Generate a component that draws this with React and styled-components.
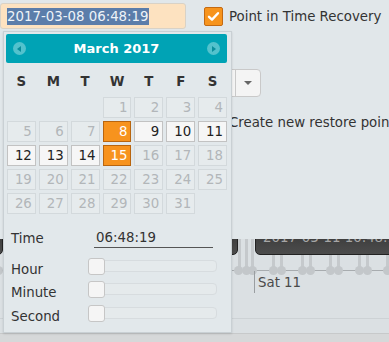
import React from 'react';
import styled, { createGlobalStyle } from 'styled-components';

const Global = createGlobalStyle`
  html, body { margin: 0; padding: 0; background: #e1e7ea; }
  body { font-family: "DejaVu Sans", Verdana, sans-serif; font-size: 13.333px; color: #333; }
  * { box-sizing: border-box; }
`;

const Page = styled.div`
  position: relative;
  width: 389px;
  height: 342px;
  overflow: hidden;
  display: flex;
  flex-direction: column;
`;

const TopBar = styled.div`
  display: flex;
  align-items: center;
  margin-top: 3px;
  height: 26px;
`;

const DateInput = styled.div`
  width: 186px;
  height: 26px;
  background: #fde2c0;
  border: 1px solid #d9d2c6;
  border-radius: 3px;
  display: flex;
  align-items: center;
  padding-left: 6px;
`;

const Selected = styled.span`
  background: #5b7daa;
  color: #eef3f8;
  line-height: 17px;
  white-space: nowrap;
`;

const CheckBox = styled.span`
  width: 19px;
  height: 19px;
  margin-left: 18px;
  background: #f7941d;
  border: 1px solid #c46a12;
  border-radius: 2px;
  display: flex;
  align-items: center;
  justify-content: center;
`;

const CheckLabel = styled.span`
  margin-left: 6px;
  color: #333;
  white-space: nowrap;
`;

const SelectRow = styled.div`
  margin-top: 40px;
  height: 28px;
  display: flex;
  padding-left: 100px;
`;

const SelectBox = styled.div`
  width: 161px;
  height: 28px;
  background: #f4f4f4;
  border: 1px solid #c9c9c9;
  border-radius: 4px;
  display: flex;
  justify-content: flex-end;
`;

const SelectButton = styled.div`
  width: 25px;
  border-left: 1px solid #c9c9c9;
  display: flex;
  align-items: center;
  justify-content: center;
`;

const Caret = styled.span`
  width: 0;
  height: 0;
  border-left: 4px solid transparent;
  border-right: 4px solid transparent;
  border-top: 4px solid #666;
`;

const OptionRow = styled.div`
  margin-top: 16px;
  height: 20px;
  line-height: 20px;
  padding-left: 229px;
  white-space: nowrap;
  color: #333;
`;

const Timeline = styled.div`
  position: relative;
  margin-top: 106px;
  flex: 1;
  overflow: hidden;
  background: #dbe0e3;
`;

const Tooltip = styled.div`
  position: absolute;
  top: -22px;
  height: 38px;
  left: ${p => p.$left}px;
  width: ${p => p.$width}px;
  background: linear-gradient(#2f2f2f, #4c4c4c);
  border: 1px solid #222;
  border-radius: 5px;
  padding: 12px 0 0 7px;
  color: #a6a6a6;
  white-space: nowrap;
  line-height: 16px;
`;

const Stem = styled.div`
  position: absolute;
  left: ${p => p.$x - 1}px;
  top: ${p => p.$top}px;
  height: ${p => 31 - p.$top}px;
  width: 3px;
  background: #c5c9cc;
`;

const Axis = styled.div`
  position: absolute;
  left: 0;
  right: 0;
  top: 31px;
  height: 1px;
  background: #a8acaf;
`;

const Dot = styled.div`
  position: absolute;
  left: ${p => p.$x - 4.5}px;
  top: 27px;
  width: 9px;
  height: 9px;
  border-radius: 50%;
  background: #c3c7ca;
`;

const DayMarker = styled.div`
  position: absolute;
  left: 254px;
  top: 32px;
  height: 22px;
  border-left: 1px solid #9a9ea1;
  padding: 4px 0 0 3px;
  color: #4a4a4a;
  white-space: nowrap;
  line-height: 16px;
`;

const Divider = styled.div`
  position: absolute;
  left: 0;
  right: 0;
  top: 79px;
  height: 1px;
  background: #cdd2d5;
`;

const Footer = styled.div`
  height: 9px;
  background: #d6d8d9;
  border-top: 1px solid #c7c9ca;
`;

/* ---------- Date picker popup ---------- */

const Popup = styled.div`
  position: absolute;
  left: 3px;
  top: 31px;
  width: 229px;
  height: 302px;
  background: #e2e8eb;
  border: 1px solid #c9d0d4;
  box-shadow: 0 1px 2px rgba(0, 0, 0, 0.12);
  padding: 2px 4px 0 2px;
  z-index: 2;
`;

const Header = styled.div`
  height: 29px;
  background: #00a3b5;
  border-radius: 2px;
  display: flex;
  align-items: center;
  justify-content: space-between;
  padding: 0 7px 0 7px;
`;

const NavButton = styled.span`
  width: 13px;
  height: 13px;
  border-radius: 50%;
  background: #53c2cd;
  display: flex;
  align-items: center;
  justify-content: center;
`;

const NavArrow = styled.span`
  width: 0;
  height: 0;
  border-top: 3.5px solid transparent;
  border-bottom: 3.5px solid transparent;
  ${p => (p.$dir === 'left'
    ? 'border-right: 4px solid #0a8e9c; margin-left: -1px;'
    : 'border-left: 4px solid #0a8e9c; margin-left: 1px;')}
`;

const Title = styled.span`
  color: #ffffff;
  font-weight: bold;
  font-size: 13px;
`;

const DayNames = styled.div`
  display: grid;
  grid-template-columns: repeat(7, 1fr);
  column-gap: 3px;
  margin: 8px 0 0 1px;
  width: 220px;
  height: 20px;
  align-items: center;
`;

const DayName = styled.span`
  text-align: center;
  font-weight: bold;
  color: #333;
`;

const Grid = styled.div`
  display: grid;
  grid-template-columns: repeat(7, 1fr);
  grid-auto-rows: 21px;
  gap: 3px;
  margin: 6px 0 0 1px;
  width: 220px;
`;

const cellStyles = {
  disabled: 'background: #e6ebed; border-color: #d3d9dc; color: #b2b6b9;',
  enabled: 'background: #f6f6f6; border-color: #c2c2c2; color: #222;',
  selected: 'background: #f7931e; border-color: #b8650f; color: #fff;',
  empty: 'background: transparent; border-color: transparent;',
};

const Cell = styled.span`
  border: 1px solid;
  text-align: right;
  padding-right: 3px;
  line-height: 19px;
  ${p => cellStyles[p.$kind]}
`;

const TimeRow = styled.div`
  display: flex;
  align-items: center;
  margin-top: 14px;
  height: 20px;
  padding-left: 5px;
`;

const RowLabel = styled.span`
  width: ${p => p.$w}px;
  flex: none;
  padding-top: ${p => p.$drop || 0}px;
`;

const TimeValue = styled.span`
  width: 119px;
  height: 20px;
  line-height: 20px;
  padding-left: 2px;
  border-bottom: 1px solid #555;
`;

const SliderRow = styled.div`
  display: flex;
  align-items: center;
  height: 23px;
  padding-left: 5px;
  margin-top: ${p => p.$mt || 0}px;
`;

const Track = styled.div`
  position: relative;
  width: 129px;
  height: 12px;
  background: #e5eaec;
  border: 1px solid #d7dcdf;
  border-radius: 4px;
`;

const Handle = styled.span`
  position: absolute;
  left: -1px;
  top: -3px;
  width: 17px;
  height: 17px;
  background: #f5f5f5;
  border: 1px solid #c6c6c6;
  border-radius: 3px;
`;

const days = [];
for (let i = 0; i < 3; i++) days.push({ n: '', k: 'empty' });
for (let d = 1; d <= 31; d++) {
  let k = 'disabled';
  if (d === 8 || d === 15) k = 'selected';
  else if (d >= 9 && d <= 14) k = 'enabled';
  days.push({ n: String(d), k });
}

const dots = [238, 246, 252, 273, 281, 302, 310, 330, 338, 359, 367, 387, -2];
const stems = [
  { x: 239, top: 0 }, { x: 246, top: 0 }, { x: 252, top: 0 },
  { x: 273, top: 16 }, { x: 281, top: 16 }, { x: 302, top: 16 }, { x: 310, top: 16 },
  { x: 330, top: 16 }, { x: 338, top: 16 }, { x: 359, top: 16 }, { x: 367, top: 16 },
  { x: 387, top: 16 },
];

export default function App() {
  return (
    <>
      <Global />
      <Page>
        <TopBar>
          <DateInput>
            <Selected>2017-03-08 06:48:19</Selected>
          </DateInput>
          <CheckBox>
            <svg width="13" height="11" viewBox="0 0 13 11">
              <path d="M2 5.8 L5 8.6 L11 2.2" fill="none" stroke="#fff" strokeWidth="2.4" strokeLinecap="round" strokeLinejoin="round" />
            </svg>
          </CheckBox>
          <CheckLabel>Point in Time Recovery</CheckLabel>
        </TopBar>

        <SelectRow>
          <SelectBox>
            <SelectButton>
              <Caret />
            </SelectButton>
          </SelectBox>
        </SelectRow>

        <OptionRow>Create new restore point</OptionRow>

        <Timeline>
          <Tooltip $left={-60} $width={63} />
          <Tooltip $left={150} $width={88} />
          {stems.map((s, i) => <Stem key={i} $x={s.x} $top={s.top} />)}
          <Tooltip $left={255} $width={200}>2017-03-11 10:48:19</Tooltip>
          <Axis />
          {dots.map((x, i) => <Dot key={i} $x={x} />)}
          <DayMarker>Sat 11</DayMarker>
          <Divider />
        </Timeline>
        <Footer />

        <Popup>
          <Header>
            <NavButton><NavArrow $dir="left" /></NavButton>
            <Title>March 2017</Title>
            <NavButton><NavArrow $dir="right" /></NavButton>
          </Header>
          <DayNames>
            {['S', 'M', 'T', 'W', 'T', 'F', 'S'].map((d, i) => <DayName key={i}>{d}</DayName>)}
          </DayNames>
          <Grid>
            {days.map((d, i) => <Cell key={i} $kind={d.k}>{d.n}</Cell>)}
          </Grid>
          <TimeRow>
            <RowLabel $w={83}>Time</RowLabel>
            <TimeValue>06:48:19</TimeValue>
          </TimeRow>
          <SliderRow $mt={6}>
            <RowLabel $w={77} $drop={7}>Hour</RowLabel>
            <Track><Handle /></Track>
          </SliderRow>
          <SliderRow>
            <RowLabel $w={77} $drop={7}>Minute</RowLabel>
            <Track><Handle /></Track>
          </SliderRow>
          <SliderRow $mt={1}>
            <RowLabel $w={77} $drop={8}>Second</RowLabel>
            <Track><Handle /></Track>
          </SliderRow>
        </Popup>
      </Page>
    </>
  );
}
